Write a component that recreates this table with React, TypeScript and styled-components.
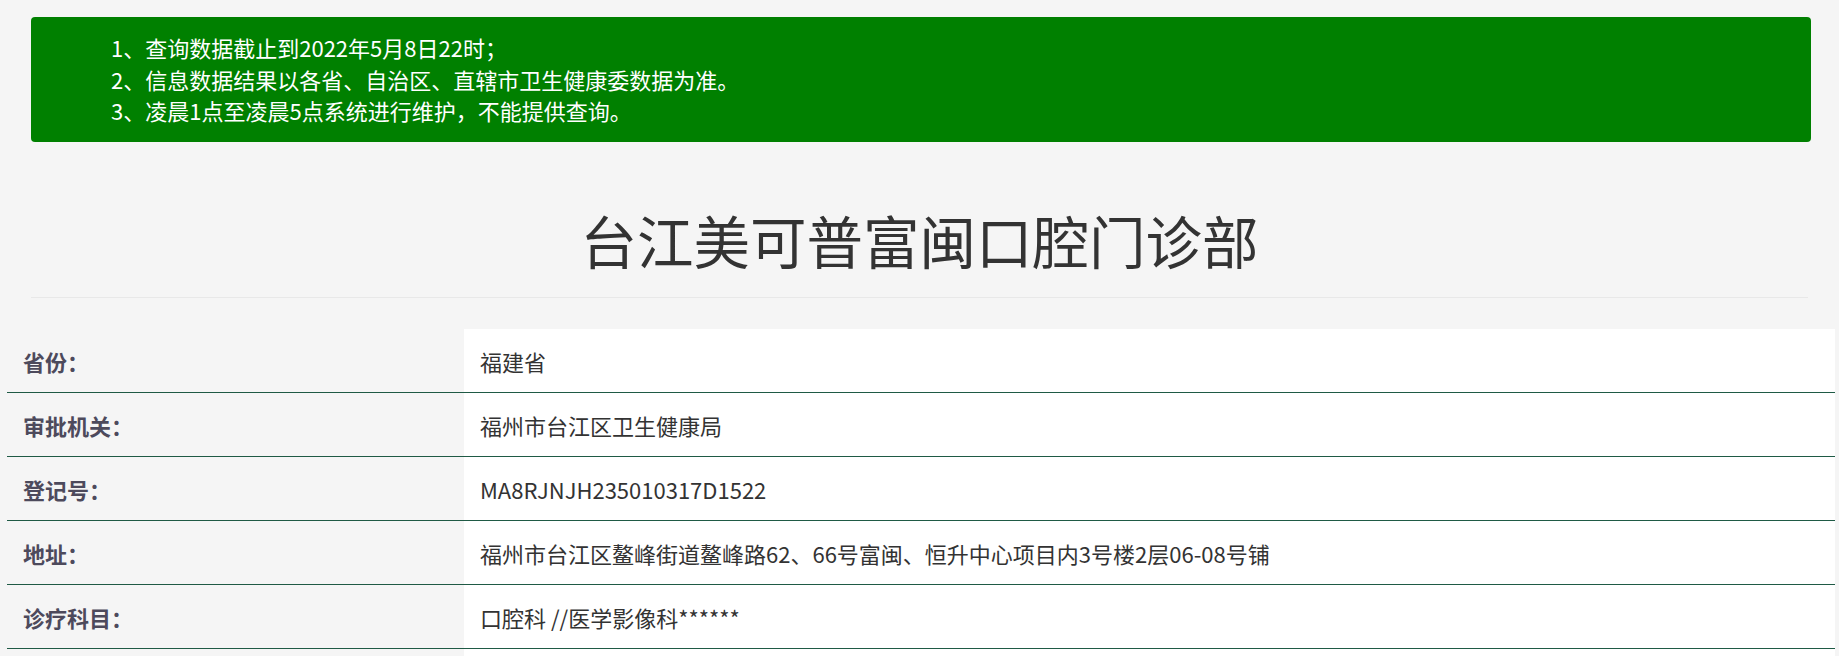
import React from "react";
import styled, { createGlobalStyle } from "styled-components";

const GlobalStyle = createGlobalStyle`
  html, body {
    margin: 0;
    padding: 0;
    background: #f5f5f5;
    font-family: "Noto Sans CJK SC", "Noto Sans", "Liberation Sans", sans-serif;
  }
`;

const Page = styled.div`
  display: flex;
  flex-direction: column;
`;

const Notice = styled.ul`
  box-sizing: border-box;
  margin: 17px 28px 0 31px;
  padding: 15px 15px 15px 80px;
  height: 125px;
  list-style: none;
  background: #008000;
  color: #ffffff;
  border-radius: 4px;
  font-size: 22px;
  line-height: 31.5px;
`;

const NoticeLine = styled.li`
  margin: 0;
  white-space: nowrap;
`;

const Header = styled.header`
  margin: 66px 31px 0 31px;
  padding-bottom: 26px;
  border-bottom: 1px solid #e8e8e8;
  text-align: center;
`;

const Title = styled.h1`
  margin: 0;
  font-size: 56.5px;
  line-height: 63px;
  font-weight: 400;
  color: #333333;
`;

const Table = styled.div`
  margin: 31px 4px 0 7px;
  display: flex;
  flex-direction: column;
`;

const Row = styled.div`
  box-sizing: border-box;
  display: grid;
  grid-template-columns: 457px 1fr;
  height: 64px;
  border-bottom: 1px solid #1f5a45;
`;

const LabelCell = styled.div`
  display: flex;
  align-items: center;
  padding: 0 16px;
  font-size: 22px;
  font-weight: 700;
  color: #4d4a5c;
`;

const ValueCell = styled.div`
  display: flex;
  align-items: center;
  padding: 0 16px;
  background: #ffffff;
  font-size: 22px;
  color: #333333;
  white-space: nowrap;
`;

const notices = [
  "1、查询数据截止到2022年5月8日22时；",
  "2、信息数据结果以各省、自治区、直辖市卫生健康委数据为准。",
  "3、凌晨1点至凌晨5点系统进行维护，不能提供查询。",
];

const rows: [string, string][] = [
  ["省份：", "福建省"],
  ["审批机关：", "福州市台江区卫生健康局"],
  ["登记号：", "MA8RJNJH235010317D1522"],
  ["地址：", "福州市台江区鳌峰街道鳌峰路62、66号富闽、恒升中心项目内3号楼2层06-08号铺"],
  ["诊疗科目：", "口腔科 //医学影像科******"],
  ["", ""],
];

export default function App() {
  return (
    <>
      <GlobalStyle />
      <Page>
        <Notice>
          {notices.map((n) => (
            <NoticeLine key={n}>{n}</NoticeLine>
          ))}
        </Notice>
        <Header>
          <Title>台江美可普富闽口腔门诊部</Title>
        </Header>
        <Table>
          {rows.map(([label, value], i) => (
            <Row key={i}>
              <LabelCell>{label}</LabelCell>
              <ValueCell>{value}</ValueCell>
            </Row>
          ))}
        </Table>
      </Page>
    </>
  );
}
